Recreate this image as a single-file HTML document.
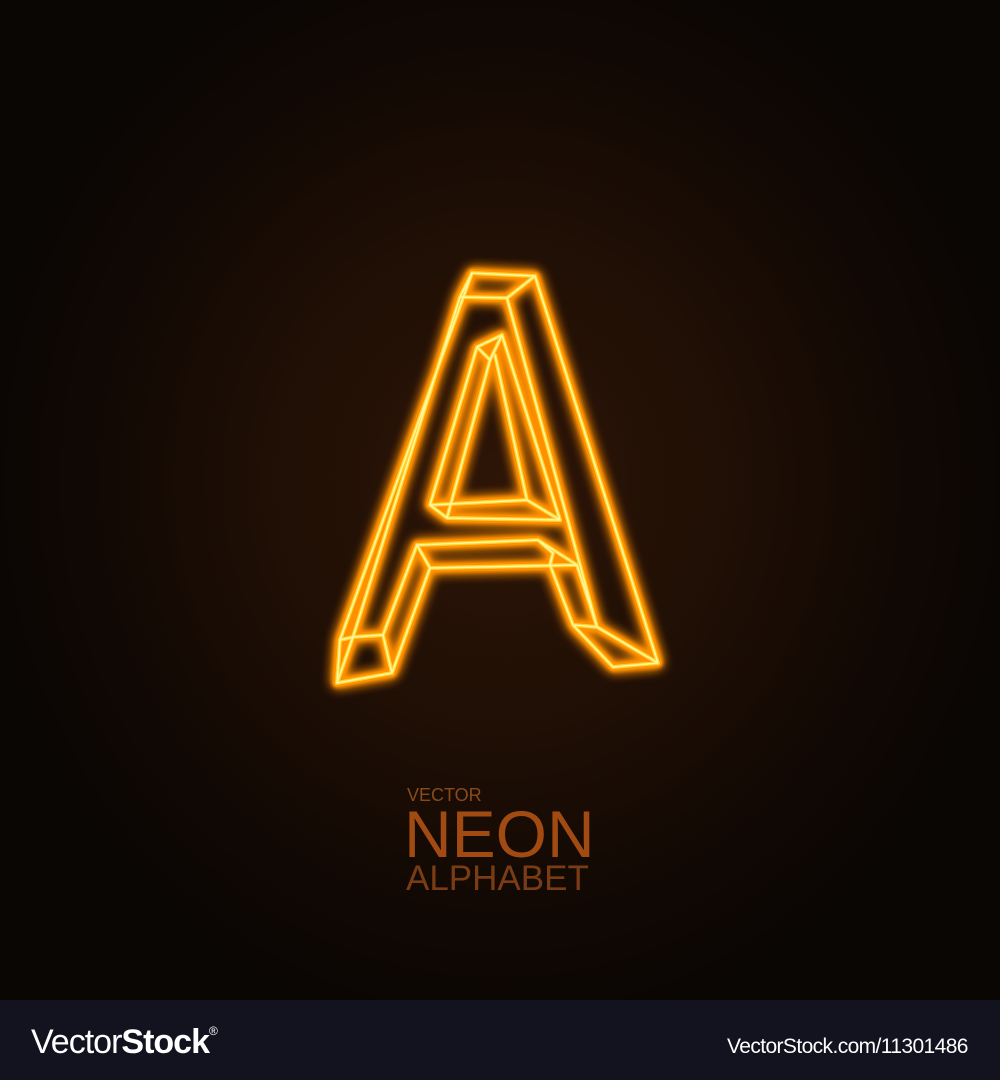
<!DOCTYPE html>
<html><head><meta charset="utf-8"><style>
html,body{margin:0;padding:0}
body{width:1000px;height:1080px;position:relative;overflow:hidden;font-family:"Liberation Sans",sans-serif;background:#0a0503}
#bg{position:absolute;left:0;top:0;width:1000px;height:1000px;background:radial-gradient(ellipse 520px 560px at 500px 480px,#2d1506 0%,#1f0f05 45%,#100804 80%,#0a0604 100%)}
svg{position:absolute;left:0;top:0}
.t{position:absolute;white-space:nowrap;line-height:1}
#foot{position:absolute;left:0;top:1000px;width:1000px;height:80px;background:#12131f;color:#fff}
</style></head><body>
<div id="bg"></div>
<svg width="1000" height="1000" viewBox="0 0 1000 1000">
<defs>
<filter id="g" x="-20%" y="-20%" width="140%" height="140%">
<feGaussianBlur in="SourceGraphic" stdDeviation="6" result="b1"/>
<feGaussianBlur in="SourceGraphic" stdDeviation="2" result="b2"/>
<feMerge><feMergeNode in="b1"/><feMergeNode in="b1"/><feMergeNode in="b2"/><feMergeNode in="b2"/><feMergeNode in="SourceGraphic"/></feMerge>
</filter>
</defs>
<g id="A" fill="none" stroke-linecap="round" stroke-linejoin="round">
<g stroke="#ff9000" stroke-width="8" filter="url(#g)">
<path id="p" d="M472,273 L535,276 L507,298 L460,297 Z
M535,276 L658,663 L613,667 L573,625
M507,298 L597,627 L658,663
M472,273 L340,640 L337,683 L392,673 L383,635 L353,637 L340,640
M460,297 L353,637
M337,683 L353,637
M417,545 L538,540 L577,565 L430,568 Z
M538,540 L553,553 L550,565
M417,545 L383,635
M430,568 L392,673
M550,565 L573,625 L597,627
M577,565 L597,627
M502,335 L560,520 L447,518 L430,505 L477,347 Z
M477,347 L490,360 L447,518
M502,335 L490,360
M430,505 L527,500 L560,520
M495,355 L527,500"/>
</g>
<g stroke="#ffd22a" stroke-width="4"><use href="#p"/></g>
<g stroke="#fff6a0" stroke-width="1.6"><use href="#p"/></g>
</g>
</svg>
<div class="t" style="left:407px;top:786px;font-size:18px;color:#8a4a1a">VECTOR</div>
<div class="t" style="left:404px;top:801px;font-size:66px;color:#a14b12">NEON</div>
<div class="t" style="left:406px;top:861px;font-size:35px;color:#7a3c14">ALPHABET</div>
<div id="foot">
<div class="t" style="left:31px;top:25px;font-size:34px;letter-spacing:-1px"><span style="font-weight:300">Vector</span><span style="font-weight:bold">Stock</span><sup style="font-size:12px;vertical-align:top">®</sup></div>
<div class="t" style="left:727px;top:36px;font-size:21px;letter-spacing:-0.6px">VectorStock.com/11301486</div>
</div>
</body></html>
